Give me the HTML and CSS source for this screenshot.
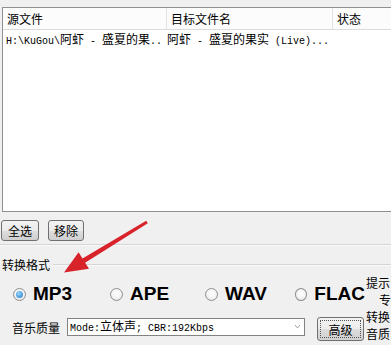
FILE: index.html
```html
<!DOCTYPE html>
<html>
<head>
<meta charset="utf-8">
<link rel="stylesheet" href="styles.css">
</head>
<body>
<div class="page">
  <div class="list">
    <div class="head">
      <div class="hc c1">源文件</div>
      <div class="hc c2">目标文件名</div>
      <div class="hc c3">状态</div>
    </div>
    <div class="row">
      <div class="rc c1"><span class="m">H:\KuGou\</span>阿虾<span class="m"> - </span>盛夏的果<span class="m">..</span></div>
      <div class="rc c2">阿虾<span class="m"> - </span>盛夏的果实<span class="m"> (Live)...</span></div>
      <div class="rc c3"></div>
    </div>
  </div>
  <div class="btnrow">
    <div class="btn b1">全选</div>
    <div class="btn b2">移除</div>
  </div>
  <div class="sep"></div>
  <div class="grouphead">
    <span class="glabel">转换格式</span>
    <span class="gline"></span>
  </div>
  <div class="bottom">
    <div class="left">
      <div class="radios">
        <div class="ritem w1"><span class="radio on"><span class="dot"></span></span><span class="rtext">MP3</span></div>
        <div class="ritem w2"><span class="radio"></span><span class="rtext">APE</span></div>
        <div class="ritem w3"><span class="radio"></span><span class="rtext">WAV</span></div>
        <div class="ritem w4"><span class="radio"></span><span class="rtext">FLAC</span></div>
      </div>
      <div class="quality">
        <span class="qlabel">音乐质量</span>
        <div class="combo">
          <span class="ctext"><span class="m">Mode:</span>立体声<span class="m">; CBR:192Kbps</span></span>
          <svg class="carrow" width="7" height="6" viewBox="0 0 7 6"><path d="M1 1 L3.5 4 L6 1" fill="none" stroke="#a0a0a0" stroke-width="1"/></svg>
        </div>
        <div class="btn adv"><span class="focus">高级</span></div>
      </div>
    </div>
    <div class="hint">
      <div>提示</div>
      <div class="ind">专</div>
      <div>转换</div>
      <div>音质</div>
    </div>
  </div>
  <svg class="arrow" width="391" height="345" viewBox="0 0 391 345">
    <polygon points="146.2,220.7 82.5,258.5 78.6,252.2 64,272.5 89,268.8 85.1,262.7 147.8,223.3" fill="#d8232a"/>
  </svg>
</div>
</body>
</html>
```

FILE: styles.css
```css
html, body {
  margin: 0;
  padding: 0;
}
body {
  background: #f0f0f0;
  width: 391px;
  height: 345px;
  overflow: hidden;
  font-family: "Noto Sans CJK SC", "DejaVu Sans", sans-serif;
  font-size: 12px;
  color: #000;
}
.page {
  position: relative;
  width: 391px;
  height: 345px;
  overflow: hidden;
}
.m {
  font-family: "Liberation Mono", "DejaVu Sans Mono", monospace;
  font-size: 10px;
  white-space: pre;
}
.list {
  margin: 7px 0 0 2px;
  width: 400px;
  height: 203px;
  border: 1px solid #8e9096;
  border-right: none;
  background: #fff;
}
.head {
  display: grid;
  grid-template-columns: 164px 166px 1fr;
  height: 21px;
  border-bottom: 1px solid #dcdcdc;
  background: #fcfcfc;
}
.hc {
  border-right: 1px solid #e2e2e2;
  padding-left: 4px;
  line-height: 21px;
  font-size: 12px;
  white-space: nowrap;
  overflow: hidden;
}
.c3 {
  border-right: none;
}
.row {
  display: grid;
  grid-template-columns: 164px 166px 1fr;
  height: 18px;
  line-height: 18px;
}
.rc {
  white-space: nowrap;
  overflow: hidden;
  font-size: 12px;
}
.row .c1 {
  padding-left: 3px;
}
.row .c2 {
  padding-left: 0;
}
.btnrow {
  display: flex;
  gap: 9px;
  padding-left: 1px;
  margin-top: 8px;
}
.btn {
  box-sizing: border-box;
  height: 21px;
  border: 1px solid #707070;
  border-radius: 3px;
  background: linear-gradient(#f3f3f3 0%, #ebebeb 50%, #dddddd 51%, #cfcfcf 100%);
  font-size: 12px;
  line-height: 19px;
  text-align: center;
}
.b1 {
  width: 38px;
}
.b2 {
  width: 36px;
}
.sep {
  height: 1px;
  background: #d5d5d5;
  margin-top: 3px;
  border-bottom: 1px solid #fafafa;
}
.grouphead {
  display: flex;
  align-items: center;
  height: 14px;
  margin-top: 12px;
  padding-left: 2px;
}
.glabel {
  font-size: 12px;
  line-height: 14px;
  padding-right: 3px;
}
.gline {
  flex: 1;
  height: 1px;
  background: #d5d5d5;
  border-bottom: 1px solid #fafafa;
}
.bottom {
  display: flex;
}
.left {
  width: 370px;
}
.radios {
  display: flex;
  align-items: center;
  height: 20px;
  margin-top: 12px;
  padding-left: 13px;
}
.ritem {
  display: flex;
  align-items: center;
  gap: 7px;
}
.w1 { width: 97px; }
.w2 { width: 95px; }
.w3 { width: 90px; }
.w4 { width: 70px; }
.radio {
  box-sizing: border-box;
  width: 13px;
  height: 13px;
  border: 1px solid #8e8f8f;
  border-radius: 50%;
  background: radial-gradient(circle at 50% 40%, #ffffff 0%, #f4f4f4 50%, #dcdcdc 100%);
  display: flex;
  align-items: center;
  justify-content: center;
}
.dot {
  width: 7px;
  height: 7px;
  border-radius: 50%;
  background: radial-gradient(circle at 40% 35%, #9fd3f7 0%, #4a9ee0 60%, #2b7cc8 100%);
}
.rtext {
  font-family: "Liberation Sans", Arial, sans-serif;
  font-weight: bold;
  font-size: 19px;
  line-height: 20px;
}
.quality {
  display: flex;
  align-items: flex-start;
  margin-top: 13px;
  padding-left: 12px;
}
.qlabel {
  font-size: 12px;
  line-height: 18px;
  margin-top: 2px;
  width: 55px;
}
.combo {
  box-sizing: border-box;
  width: 238px;
  height: 18px;
  margin-top: 1px;
  border: 1px solid #828282;
  background: #fff;
  display: flex;
  align-items: center;
  justify-content: space-between;
  padding: 0 3px 0 2px;
}
.ctext {
  font-size: 12px;
  line-height: 16px;
  white-space: nowrap;
}
.carrow {
  display: block;
}
.adv {
  width: 47px;
  height: 24px;
  margin-left: 12px;
  padding: 2px;
  line-height: 18px;
}
.focus {
  display: block;
  height: 18px;
  border: 1px dotted #555;
  line-height: 18px;
  box-sizing: border-box;
}
.hint {
  padding-top: 2px;
  font-size: 12px;
  line-height: 17px;
  white-space: nowrap;
}
.ind {
  padding-left: 13px;
}
.arrow {
  position: absolute;
  left: 0;
  top: 0;
  pointer-events: none;
}
```
